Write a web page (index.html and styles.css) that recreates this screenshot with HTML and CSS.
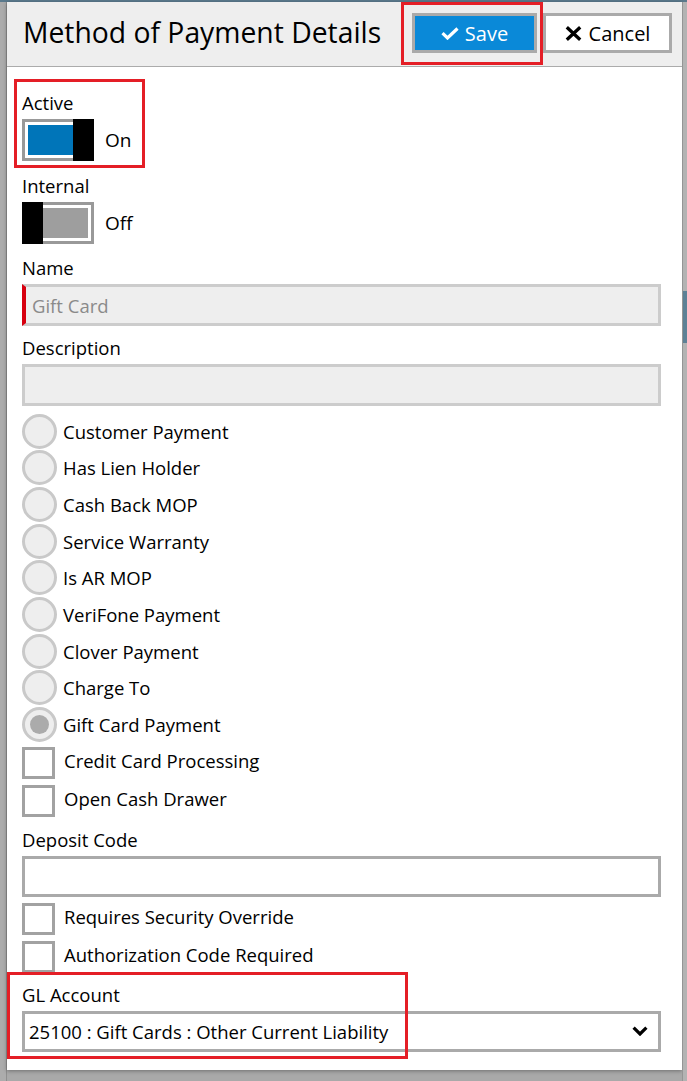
FILE: index.html
```html
<!DOCTYPE html>
<html lang="en">
<head>
<meta charset="utf-8">
<title>Method of Payment Details</title>
<link rel="stylesheet" href="styles.css">
</head>
<body>
<div class="screen">
  <div class="side side-left"></div>
  <div class="dialog">
    <header class="header">
      <h1 class="title">Method of Payment Details</h1>
      <div class="actions">
        <div class="mark mark-save">
          <button class="btn btn-save" type="button">
            <svg class="ico-check" width="18" height="13" viewBox="0 0 18 13"><polyline points="1.5,6.2 6.5,11 16.5,1.5" fill="none" stroke="#fff" stroke-width="3.2"/></svg>
            <span>Save</span>
          </button>
        </div>
        <button class="btn btn-cancel" type="button">
          <svg class="ico-x" width="17" height="15" viewBox="0 0 17 15"><path d="M1.8 1.2 L15.2 13.8 M15.2 1.2 L1.8 13.8" fill="none" stroke="#000" stroke-width="3.3"/></svg>
          <span>Cancel</span>
        </button>
      </div>
    </header>

    <div class="body">
      <div class="field field-toggle first mark mark-active">
        <div class="label">Active</div>
        <div class="toggle-row">
          <div class="toggle on"><span class="track"><span class="fill"></span></span><span class="knob"></span></div>
          <span class="toggle-text">On</span>
        </div>
      </div>

      <div class="field field-toggle">
        <div class="label">Internal</div>
        <div class="toggle-row">
          <div class="toggle off"><span class="knob"></span><span class="track"><span class="fill"></span></span></div>
          <span class="toggle-text">Off</span>
        </div>
      </div>

      <div class="field field-input">
        <div class="label">Name</div>
        <div class="input required"><span class="placeholder">Gift Card</span></div>
      </div>

      <div class="field field-input last-input">
        <div class="label">Description</div>
        <div class="input"></div>
      </div>

      <div class="radios">
        <div class="radio"><span class="radio-dot"></span><span class="opt">Customer Payment</span></div>
        <div class="radio"><span class="radio-dot"></span><span class="opt">Has Lien Holder</span></div>
        <div class="radio"><span class="radio-dot"></span><span class="opt">Cash Back MOP</span></div>
        <div class="radio"><span class="radio-dot"></span><span class="opt">Service Warranty</span></div>
        <div class="radio"><span class="radio-dot"></span><span class="opt">Is AR MOP</span></div>
        <div class="radio"><span class="radio-dot"></span><span class="opt">VeriFone Payment</span></div>
        <div class="radio"><span class="radio-dot"></span><span class="opt">Clover Payment</span></div>
        <div class="radio"><span class="radio-dot"></span><span class="opt">Charge To</span></div>
        <div class="radio checked"><span class="radio-dot"></span><span class="opt">Gift Card Payment</span></div>
      </div>

      <div class="checks checks-a">
        <div class="check"><span class="check-box"></span><span class="opt">Credit Card Processing</span></div>
        <div class="check"><span class="check-box"></span><span class="opt">Open Cash Drawer</span></div>
      </div>

      <div class="field field-deposit">
        <div class="label">Deposit Code</div>
        <div class="input plain"></div>
      </div>

      <div class="checks checks-b">
        <div class="check"><span class="check-box"></span><span class="opt">Requires Security Override</span></div>
        <div class="check"><span class="check-box"></span><span class="opt">Authorization Code Required</span></div>
      </div>

      <div class="field mark mark-gl">
        <div class="label">GL Account</div>
        <div class="select">
          <span class="select-text">25100 : Gift Cards : Other Current Liability</span>
          <svg class="ico-chev" width="16" height="10" viewBox="0 0 16 10"><polyline points="1.6,1.6 8,8 14.4,1.6" fill="none" stroke="#000" stroke-width="3.2"/></svg>
        </div>
      </div>
    </div>
  </div>
  <div class="side side-right"><span class="side-block"></span></div>
</div>
</body>
</html>
```

FILE: styles.css
```css
*, *::before, *::after { box-sizing: border-box; }
html, body { margin: 0; padding: 0; }
body {
  width: 687px;
  height: 1081px;
  overflow: hidden;
  background: #a9a9a9;
  font-family: "Open Sans", "Noto Sans", sans-serif;
  color: #000;
}
.screen {
  height: 1081px;
  border-top: 2px solid #5b7a8d;
  display: flex;
  align-items: flex-start;
}
.side { flex: none; height: 1079px; }
.side-left { width: 7px; background: #acacac; border-right: 1px solid #8f8f8f; }
.side-right { width: 5px; background: #b3b3b3; border-left: 1px solid #959595; display: flex; flex-direction: column; }
.side-block { margin-top: 289px; height: 52px; background: #5d8196; }

.dialog {
  flex: none;
  width: 675px;
  height: 1068px;
  background: #fff;
  display: flex;
  flex-direction: column;
  box-shadow: 0 1px 4px rgba(0,0,0,0.35);
}

/* header */
.header {
  flex: none;
  height: 65px;
  background: #eeeeee;
  border-bottom: 1px solid #ababab;
  display: flex;
  align-items: flex-start;
  padding: 11px 10px 0 16px;
}
.title {
  margin: 0;
  font-size: 28.3px;
  font-weight: 400;
  line-height: 38px;
  white-space: nowrap;
}
.actions { margin-left: auto; display: flex; gap: 6px; }
.btn {
  height: 40px;
  border: 3px solid #aaaaaa;
  display: flex;
  align-items: center;
  justify-content: center;
  font-family: inherit;
  font-size: 20px;
  padding: 2px 0 0 0;
  margin: 0;
  line-height: 1;
}
.btn-save { width: 125px; background: #0a89d8; color: #fff; gap: 6px; }
.btn-cancel { width: 129px; background: #fff; color: #000; gap: 7px; }
.btn svg { flex: none; margin-top: -2px; }

/* annotation marks */
.mark { position: relative; }
.mark::after {
  content: "";
  position: absolute;
  border: 3px solid #e41e26;
  pointer-events: none;
}
.mark-save::after { top: -11px; left: -11px; width: 142px; height: 63px; }
.mark-active::after { top: -12px; left: -8px; width: 131px; height: 89px; }
.mark-gl::after { top: -11px; left: -15px; width: 401px; height: 87px; }

/* body */
.body {
  flex: 1;
  display: flex;
  flex-direction: column;
  padding: 24px 21px 0 15px;
}
.label {
  font-size: 18.5px;
  line-height: 24px;
  margin-bottom: 4px;
  white-space: nowrap;
}
.field-toggle { margin-bottom: 12px; }
.field-toggle.first { margin-bottom: 13px; }
.toggle-row { display: flex; align-items: center; }
.toggle { display: flex; width: 72px; height: 42px; flex: none; }
.knob { width: 21px; background: #000; flex: none; }
.track { flex: 1; border: 3px solid #999999; padding: 3px; background: #fff; display: flex; }
.toggle.on .track { border-right: 0; padding-right: 0; }
.toggle.off .track { border-left: 0; padding-left: 0; }
.fill { flex: 1; }
.toggle.on .fill { background: #0075b9; }
.toggle.off .fill { background: #9e9e9e; }
.toggle-text { margin-left: 11px; font-size: 19px; }

.field-input { margin-bottom: 10px; }
.field-input.last-input { margin-bottom: 7px; }
.input {
  height: 42px;
  border: 3px solid #cccccc;
  background: #eeeeee;
  display: flex;
  align-items: center;
  padding: 0 6px;
  font-size: 18.5px;
}
.input.required { border-left: 4px solid #d7000f; }
.placeholder { color: #8a8a8a; }
.input.plain { background: #fff; border-color: #aaaaaa; height: 41px; }

.radios { display: flex; flex-direction: column; margin-bottom: 4px; }
.radio { height: 36.667px; display: flex; align-items: center; }
.radio-dot {
  flex: none;
  width: 35px;
  height: 35px;
  border-radius: 50%;
  border: 3px solid #c9c9c9;
  background: #eeeeee;
  margin-right: 6px;
  display: flex;
  align-items: center;
  justify-content: center;
}
.radio.checked .radio-dot::before {
  content: "";
  width: 19px;
  height: 19px;
  border-radius: 50%;
  background: #ababab;
}
.opt { font-size: 18.5px; white-space: nowrap; }

.checks { display: flex; flex-direction: column; gap: 6px; }
.checks-a { margin-bottom: 11px; }
.checks-b { margin-bottom: 10px; }
.check { height: 32px; display: flex; align-items: center; }
.check-box {
  flex: none;
  width: 33px;
  height: 32px;
  border: 3px solid #a2a2a2;
  background: #fff;
  margin-right: 9px;
}
.check .opt { padding-bottom: 4px; }

.field-deposit { margin-bottom: 6px; }

.select {
  height: 41px;
  border: 3px solid #aaaaaa;
  background: #fff;
  display: flex;
  align-items: center;
  justify-content: space-between;
  padding: 0 10px 0 4px;
}
.select-text { font-size: 18.5px; white-space: nowrap; }
.ico-chev { flex: none; }
```
